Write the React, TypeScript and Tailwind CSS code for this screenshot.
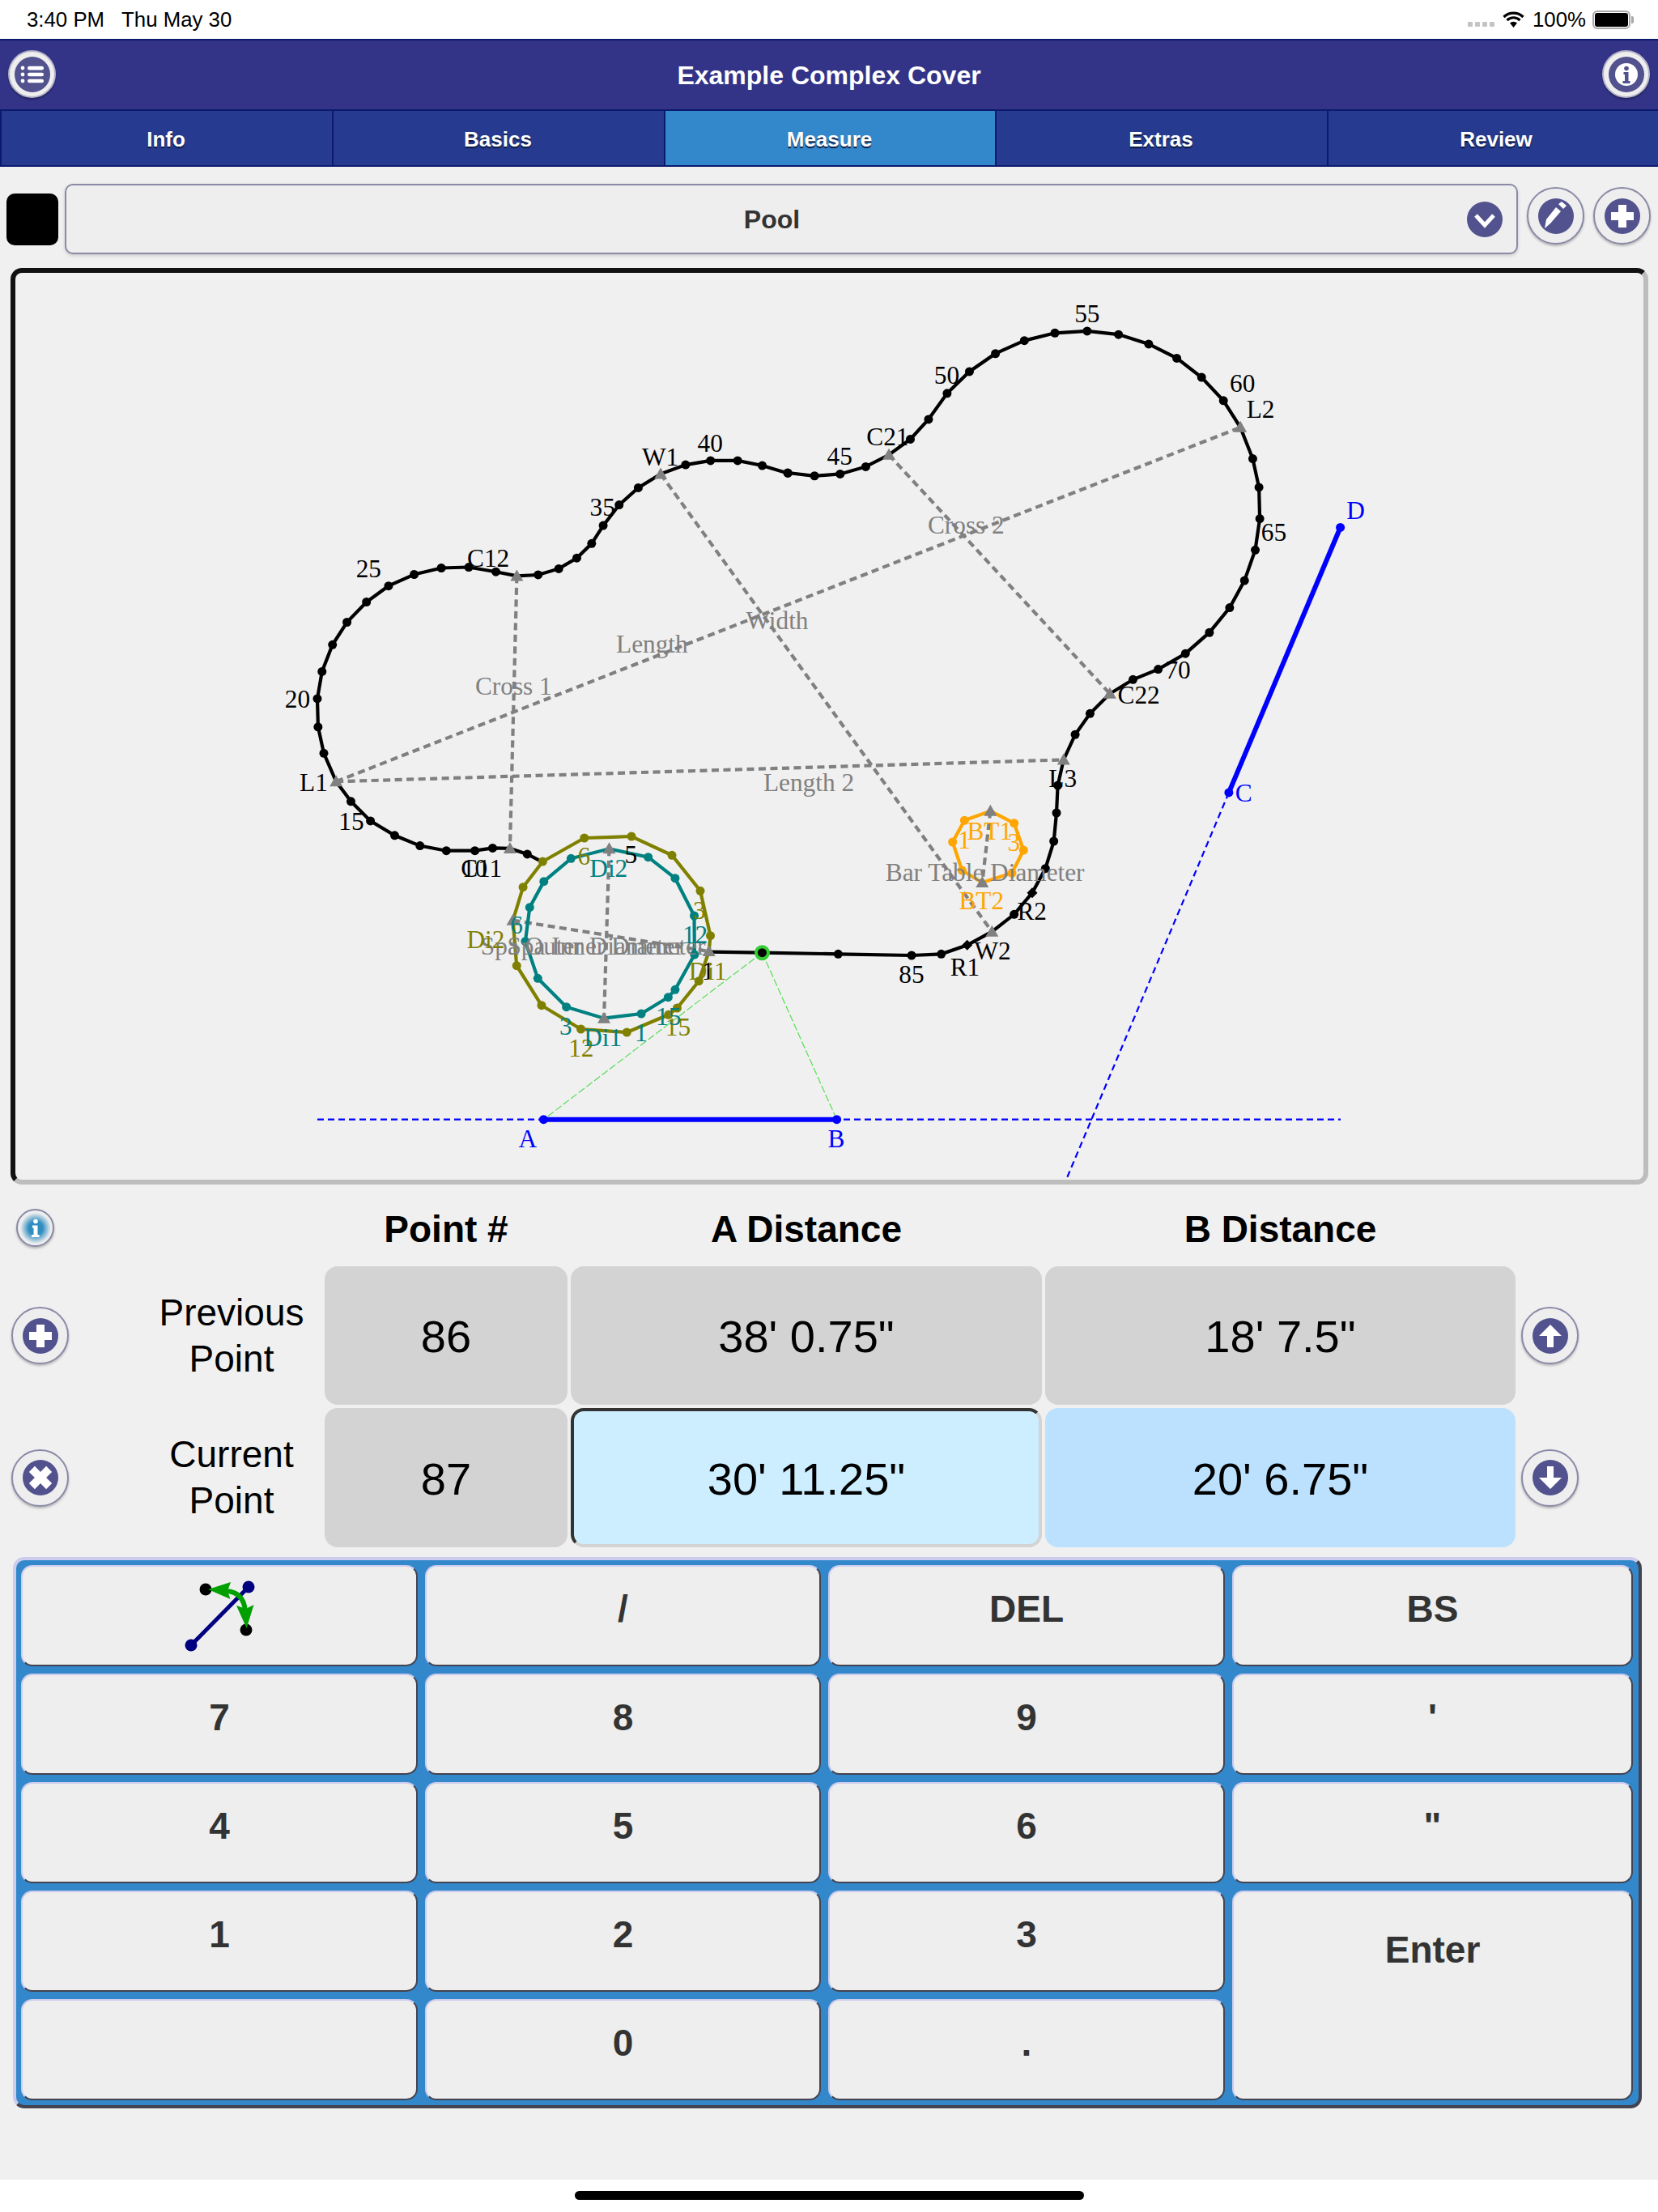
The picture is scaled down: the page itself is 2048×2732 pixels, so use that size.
import React from "react";

type P = [number, number];
const z3 = (x: number, y: number): P => [300 + x / 2.24, 340 + y / 2.119];
const z4 = (x: number, y: number): P => [950 + x / 1.96, 340 + y / 2.119];
const z5 = (x: number, y: number): P => [540 + x / 2.8, 980 + y / 3];
const z6 = (x: number, y: number): P => [1050 + x / 3, 960 + y / 3];
const pts = (a: P[]) => a.map((p) => p[0].toFixed(1) + "," + p[1].toFixed(1)).join(" ");

const upper: P[] = [
  z3(258, 1325), z3(224, 1251), z3(208, 1182), z3(206, 1108), z3(219, 1037), z3(248, 967), z3(288, 908), z3(342, 855),
  z3(403, 813), z3(474, 783), z3(549, 766), z3(625, 764), z3(700, 776), z3(758, 787), z3(817, 784), z3(874, 768),
  z3(924, 740), z3(965, 702), z3(997, 655), z3(1041, 601), z3(1094, 556), z3(1156, 520), z3(1225, 496), z3(1294, 485),
  z3(1369, 485), z3(1437, 498), z3(1508, 518),
  z4(45, 517), z4(110, 525), z4(172, 520), z4(234, 501), z4(290, 470), z4(342, 429), z4(386, 377), z4(431, 309),
  z4(485, 252), z4(548, 205), z4(618, 171), z4(692, 151), z4(770, 146), z4(846, 155), z4(919, 180), z4(987, 217),
  z4(1047, 267), z4(1100, 328), z4(1141, 398), z4(1171, 480), z4(1186, 555), z4(1188, 637), z4(1177, 719), z4(1151, 799),
  z4(1115, 870), z4(1066, 935), z4(1008, 990), z4(942, 1031), z4(881, 1058), z4(825, 1095), z4(777, 1147), z4(741, 1202),
  z4(713, 1268), z4(699, 1335), z6(765, 132), z6(755, 237), z6(724, 338), z6(675, 428), z6(608, 508), z6(526, 572),
  z6(434, 622), z6(338, 655), z6(228, 660), z5(1387, 595), z5(1124, 590), z5(940, 587),
];
const lower: P[] = [
  z3(258, 1325), z3(299, 1377), z3(353, 1428), z3(420, 1466), z3(490, 1493), z3(563, 1506), z3(642, 1506), z3(691, 1499),
  z3(739, 1500), z3(787, 1515), z3(828, 1535),
];
const olive: P[] = [
  z5(509, 165), z5(672, 159), z5(812, 229), z5(910, 361), z5(945, 527), z5(940, 585), z5(905, 695), z5(830, 795),
  z5(800, 820), z5(656, 885), z5(497, 873), z5(361, 785), z5(275, 638), z5(262, 470), z5(297, 347), z5(365, 252),
];
const teal: P[] = [
  z5(595, 205), z5(730, 236), z5(823, 314), z5(889, 453), z5(890, 597), z5(823, 727), z5(799, 755), z5(706, 816),
  z5(577, 833), z5(447, 791), z5(348, 685), z5(305, 548), z5(320, 422), z5(369, 326), z5(463, 241),
];
const orange: P[] = [z6(520, 125), z6(608, 170), z6(643, 270), z6(600, 355), z6(490, 390), z6(415, 345), z6(380, 240), z6(424, 160)];

const triIdx = new Set([0, 13, 21, 31, 45, 56, 59, 66, 72]);
const diamondIdx = new Set([64, 67]);

const dashes: [P, P][] = [
  [z3(258, 1325), z4(713, 1268)],
  [z3(258, 1325), z4(1141, 398)],
  [z3(1156, 520), z6(526, 572)],
  [z3(758, 787), z3(739, 1500)],
  [z4(290, 470), z4(825, 1095)],
  [z5(595, 205), z5(577, 833)],
  [z5(262, 470), z5(940, 585)],
  [z6(520, 125), z6(490, 390)],
];
const triangles: P[] = [
  z3(258, 1325), z3(758, 787), z3(1156, 520), z3(739, 1500), z4(290, 470), z4(1141, 398), z4(825, 1095), z4(713, 1268),
  z6(526, 572), z5(940, 585), z5(595, 205), z5(577, 833), z5(262, 470), z6(520, 125), z6(490, 390),
];

type L = [string, P, string];
const BK = "#000000", GR = "#808080", OL = "#808000", TE = "#008080", OR = "#ffa500", BL = "#0000ff";
const labels: L[] = [
  ["20", z3(151, 1132), BK], ["25", z3(348, 790), BK], ["C12", z3(679, 763), BK], ["W1", z3(1155, 497), BK],
  ["40", z3(1293, 462), BK], ["35", z3(995, 630), BK], ["L1", z3(196, 1350), BK], ["15", z3(300, 1452), BK],
  ["C11", z5(153, 308), BK], ["10", z5(130, 308), BK],
  ["55", z4(770, 122), BK], ["50", z4(430, 285), BK], ["C21", z4(287, 445), BK], ["45", z4(171, 495), BK],
  ["60", z4(1146, 305), BK], ["L2", z4(1190, 374), BK], ["65", z4(1222, 695), BK], ["70", z4(990, 1055), BK],
  ["C22", z4(895, 1120), BK], ["L3", z4(711, 1340), BK],
  ["R2", z6(674, 528), BK], ["W2", z6(528, 675), BK], ["R1", [1192, 1205], BK], ["85", [1126, 1214], BK],
  ["5", z5(670, 258), BK], ["1", z5(937, 690), BK],
  ["Cross 1", z3(749, 1098), GR], ["Length", z3(1132, 987), GR], ["Width", [960, 777], GR], ["Length 2", [999, 977], GR],
  ["Cross 2", z4(477, 677), GR], ["Bar Table Diameter", z6(500, 383), GR],
  ["Spa Outer Diameter", [719, 1179], GR], ["Spa Inner Diameter", [749, 1179], GR],
  ["BT1", z6(517, 230), OR], ["1", z6(423, 263), OR], ["3", z6(607, 272), OR], ["BT2", z6(487, 490), OR],
  ["6", z5(508, 265), OL], ["3", z5(907, 465), OL], ["Di2", z5(168, 572), OL], ["12", z5(498, 975), OL],
  ["15", z5(833, 897), OL], ["Di1", z5(936, 690), OL],
  ["Di2", z5(593, 310), TE], ["12", z5(892, 555), TE], ["6", [638, 1153], TE], ["3", z5(445, 893), TE],
  ["Di1", z5(573, 935), TE], ["1", z5(705, 917), TE], ["15", z5(800, 858), TE],
  ["D", z4(1420, 637), BL], ["C", z4(1149, 1377), BL], ["A", z5(313, 1310), BL], ["B", z5(1380, 1310), BL],
];

const ptA = z5(368, 1208), ptB = z5(1382, 1208), ptC = z4(1113, 1354), ptD = z4(1383, 660), cur = z5(1124, 590);

function Drawing() {
  return (
    <svg viewBox="19 337 2011 1120" className="block w-full h-full font-['Liberation_Serif',serif]">
      <line x1={cur[0]} y1={cur[1]} x2={ptA[0]} y2={ptA[1]} stroke="#55dd55" strokeWidth="1.2" strokeDasharray="9 3" />
      <line x1={cur[0]} y1={cur[1]} x2={ptB[0]} y2={ptB[1]} stroke="#55dd55" strokeWidth="1.2" strokeDasharray="9 3" />
      <line x1="392" y1={ptA[1]} x2="1656" y2={ptA[1]} stroke={BL} strokeWidth="2.2" strokeDasharray="8 5" />
      <line x1={ptC[0]} y1={ptC[1]} x2="1317" y2="1457" stroke={BL} strokeWidth="2.2" strokeDasharray="8 5" />
      <line x1={ptA[0]} y1={ptA[1]} x2={ptB[0]} y2={ptB[1]} stroke={BL} strokeWidth="6" />
      <line x1={ptC[0]} y1={ptC[1]} x2={ptD[0]} y2={ptD[1]} stroke={BL} strokeWidth="6" />
      {[ptA, ptB, ptC, ptD].map((p, i) => (
        <circle key={i} cx={p[0]} cy={p[1]} r="5.5" fill={BL} />
      ))}
      <polyline points={pts(upper)} fill="none" stroke="#000" strokeWidth="4.2" />
      <polyline points={pts(lower)} fill="none" stroke="#000" strokeWidth="4.2" />
      <circle cx={cur[0]} cy={cur[1]} r="9.5" fill="#33cc33" />
      {upper.map((p, i) =>
        triIdx.has(i) ? null : diamondIdx.has(i) ? (
          <polygon key={i} points={`${p[0]},${p[1] - 6.5} ${p[0] + 6.5},${p[1]} ${p[0]},${p[1] + 6.5} ${p[0] - 6.5},${p[1]}`} fill="#000" />
        ) : (
          <circle key={i} cx={p[0]} cy={p[1]} r="5.5" fill="#000" />
        )
      )}
      {lower.slice(1, -1).map((p, i) => (i === 7 ? null : <circle key={i} cx={p[0]} cy={p[1]} r="5.5" fill="#000" />))}
      {dashes.map(([a, b], i) => (
        <line key={i} x1={a[0]} y1={a[1]} x2={b[0]} y2={b[1]} stroke="#808080" strokeWidth="4.2" strokeDasharray="9 5.5" />
      ))}
      <polygon points={pts(olive)} fill="none" stroke={OL} strokeWidth="4.2" />
      {olive.map((p, i) => (i === 5 || i === 13 ? null : <circle key={i} cx={p[0]} cy={p[1]} r="5.5" fill={OL} />))}
      <polygon points={pts(teal)} fill="none" stroke={TE} strokeWidth="4.2" />
      {teal.map((p, i) => (i === 0 || i === 8 ? null : <circle key={i} cx={p[0]} cy={p[1]} r="5.5" fill={TE} />))}
      <polygon points={pts(orange)} fill="none" stroke={OR} strokeWidth="4.2" />
      {orange.map((p, i) => (i === 0 || i === 4 ? null : <circle key={i} cx={p[0]} cy={p[1]} r="5.5" fill={OR} />))}
      {triangles.map((p, i) => (
        <polygon key={i} points={`${p[0]},${p[1] - 8} ${p[0] + 8},${p[1] + 6} ${p[0] - 8},${p[1] + 6}`} fill="#808080" />
      ))}
      {labels.map(([t, p, c], i) => (
        <text key={i} x={p[0]} y={p[1]} fill={c} fontSize="31.3" textAnchor="middle">
          {t}
        </text>
      ))}
    </svg>
  );
}

function Disc({ children, r = 22 }: { children?: React.ReactNode; r?: number }) {
  return (
    <svg viewBox="-24 -24 48 48" width="48" height="48" className="block shrink-0">
      <circle r={r} fill="#52528e" />
      {children}
    </svg>
  );
}

const PlusGlyph = () => <polygon points="-5,-14 5,-14 5,-5 14,-5 14,5 5,5 5,14 -5,14 -5,5 -14,5 -14,-5 -5,-5" fill="#fff" />;
const CrossGlyph = () => (
  <g transform="rotate(45)">
    <polygon points="-5,-15 5,-15 5,-5 15,-5 15,5 5,5 5,15 -5,15 -5,5 -15,5 -15,-5 -5,-5" fill="#fff" />
  </g>
);
const UpGlyph = () => <polygon points="0,-14 14,0 4,0 4,14 -4,14 -4,0 -14,0" fill="#fff" />;
const DownGlyph = () => <polygon points="0,14 14,0 4,0 4,-14 -4,-14 -4,0 -14,0" fill="#fff" />;
const PencilGlyph = () => (
  <g fill="#fff">
    <polygon points="-14,15 -12,4 0,-11 6,-6 -7,9" />
    <polygon points="3,-15 7,-18 13,-13 9,-9" />
  </g>
);

function RoundBtn({ children, className = "" }: { children: React.ReactNode; className?: string }) {
  return (
    <div
      className={
        "w-[71px] h-[71px] rounded-full border-2 border-[#8a8aa8] bg-[#eeeeee] shadow-[0_2px_3px_rgba(0,0,0,0.25)] flex items-center justify-center shrink-0 " +
        className
      }
    >
      {children}
    </div>
  );
}

function HeaderBtn({ children }: { children: React.ReactNode }) {
  return (
    <div className="w-[59px] h-[59px] rounded-full border-2 border-[#b4b4c8] bg-[#eeeeee] shadow-[0_2px_2px_rgba(0,0,0,0.3)] flex items-center justify-center">
      {children}
    </div>
  );
}

const Wifi = () => (
  <svg width="27" height="20" viewBox="0 0 27 20" className="block">
    <g fill="none" stroke="#000" strokeWidth="3.2">
      <path d="M1.5 7 A17 17 0 0 1 25.5 7" />
      <path d="M5.5 11 A11.5 11.5 0 0 1 21.5 11" />
    </g>
    <path d="M9 14.5 A6.5 6.5 0 0 1 18 14.5 L13.5 20 Z" fill="#000" />
  </svg>
);

const tabs = ["Info", "Basics", "Measure", "Extras", "Review"];

const cellBase = "rounded-[16px] flex items-center justify-center pt-[3px] text-[56px] text-black";

function Key({ label, className = "" }: { label?: React.ReactNode; className?: string }) {
  return (
    <div
      className={
        "bg-[#eeeeee] rounded-[14px] border-2 border-t-[#ccccee] border-l-[#ccccee] border-b-[#444450] border-r-[#444450] flex items-center justify-center pb-[16px] text-[46px] font-bold text-[#333333] " +
        className
      }
    >
      {label}
    </div>
  );
}

const MoveIcon = () => (
  <svg viewBox="220 1945 100 100" width="100" height="100" className="block mt-[10px]">
    <line x1="235" y1="2032" x2="306" y2="1960" stroke="#000080" strokeWidth="5" />
    <circle cx="235" cy="2032" r="7.5" fill="#000080" />
    <circle cx="306" cy="1960" r="7.5" fill="#000080" />
    <circle cx="253" cy="1963" r="7.5" fill="#000" />
    <circle cx="303" cy="2013" r="7.5" fill="#000" />
    <path d="M278 1965 Q300 1966 302 1990" fill="none" stroke="#00a000" strokeWidth="6" />
    <polygon points="256,1963 284,1954 280,1965 283.5,1975" fill="#00a000" />
    <polygon points="303.6,2011 291,1983 302.7,1987 312.5,1982" fill="#00a000" />
  </svg>
);

export default function App() {
  return (
    <div className="w-[2048px] h-[2732px] flex flex-col bg-white font-['Liberation_Sans',Arial,sans-serif] overflow-hidden">
      {/* status bar */}
      <div className="h-[48px] shrink-0 flex items-center justify-between pl-[33px] pr-[30px] text-[25.8px] text-black">
        <div className="flex gap-[21px]">
          <span>3:40 PM</span>
          <span>Thu May 30</span>
        </div>
        <div className="flex items-center">
          <div className="flex gap-[3px] mt-[12px] mr-[10px]">
            <i className="block w-[6px] h-[6px] rounded-[1px] bg-[#c4c4c4]" />
            <i className="block w-[6px] h-[6px] rounded-[1px] bg-[#c4c4c4]" />
            <i className="block w-[6px] h-[6px] rounded-[1px] bg-[#c4c4c4]" />
            <i className="block w-[6px] h-[6px] rounded-[1px] bg-[#c4c4c4]" />
          </div>
          <Wifi />
          <span className="ml-[10px] mr-[8px]">100%</span>
          <div className="w-[47px] h-[23px] rounded-[6px] border-2 border-[#a8a8a8] p-[1px]">
            <div className="w-full h-full bg-black rounded-[3px]" />
          </div>
          <div className="w-[3px] h-[9px] bg-[#a8a8a8] rounded-r-[2px] ml-[1px]" />
        </div>
      </div>

      {/* header */}
      <div className="h-[87px] shrink-0 border-t-2 border-[#0c1a6e] bg-[#333388] flex items-center justify-between px-[10px] pb-[2px]">
        <HeaderBtn>
          <Disc>
            <g fill="#fff">
              <circle cx="-12" cy="-8" r="2.4" />
              <circle cx="-12" cy="0" r="2.4" />
              <circle cx="-12" cy="8" r="2.4" />
              <rect x="-6" y="-10.2" width="20" height="4.6" rx="2.2" />
              <rect x="-6" y="-2.3" width="20" height="4.6" rx="2.2" />
              <rect x="-6" y="5.7" width="20" height="4.6" rx="2.2" />
            </g>
          </Disc>
        </HeaderBtn>
        <div className="text-[32px] font-bold text-white mt-[3px]">Example Complex Cover</div>
        <HeaderBtn>
          <Disc>
            <circle r="14" fill="#fff" />
            <circle cy="-7.5" r="2.8" fill="#52528e" />
            <polygon points="-3.5,-3 2.5,-3 2.5,8 4.5,8 4.5,11 -4.5,11 -4.5,8 -2,8 -2,0 -3.5,0" fill="#52528e" />
          </Disc>
        </HeaderBtn>
      </div>

      {/* tabs */}
      <div className="h-[71px] shrink-0 grid grid-cols-[410px_410px_409px_410px_409px] bg-[#263a8f] border-y-2 border-[#0c1a6e]">
        {tabs.map((t) => (
          <div
            key={t}
            className={
              "flex items-center justify-center border-l-2 border-[#0c1a6e] pt-[3px] text-[26px] font-bold text-white [text-shadow:0_2px_1px_#0c1a40] " +
              (t === "Measure" ? "bg-[#3388cc] " : "") +
              (t === "Review" ? "pl-[7px]" : "pr-[2px]")
            }
          >
            {t}
          </div>
        ))}
      </div>

      {/* content */}
      <div className="h-[2486px] shrink-0 bg-[#f0f0f0] flex flex-col">
        <div className="flex items-center pl-[8px] pt-[21px] mb-[17px]">
          <div className="w-[64px] h-[64px] rounded-[10px] bg-black mr-[8px]" />
          <div className="w-[1795px] h-[87px] rounded-[10px] border-2 border-[#8a8aa8] bg-[#eeeeee] shadow-[0_2px_4px_rgba(0,0,0,0.15)] flex items-center mr-[11px]">
            <div className="flex-1 pl-[15px] text-center text-[32px] font-bold text-[#333333]">Pool</div>
            <div className="mr-[15px]">
              <Disc>
                <polyline points="-11,-5 0,7 11,-5" fill="none" stroke="#fff" strokeWidth="5" />
              </Disc>
            </div>
          </div>
          <RoundBtn className="mr-[11px] mb-[8px]">
            <Disc>
              <PencilGlyph />
            </Disc>
          </RoundBtn>
          <RoundBtn className="mb-[8px]">
            <Disc>
              <PlusGlyph />
            </Disc>
          </RoundBtn>
        </div>

        <div className="ml-[13px] w-[2023px] h-[1132px] shrink-0 rounded-[14px] border-[6px] border-t-[#111111] border-l-[#111111] border-b-[#bdbdbd] border-r-[#bdbdbd] overflow-hidden mb-[30px]">
          <Drawing />
        </div>

        <div className="ml-[14px] grid grid-cols-[383px_300px_582px_581px_auto] grid-rows-[67px_171px_172px] gap-x-[4px] gap-y-[4px] text-black">
          <div className="pl-[6px]">
            <div className="w-[47px] h-[47px] rounded-full border-2 border-[#8a8aa8] bg-[#eeeeee] shadow-[0_2px_3px_rgba(0,0,0,0.25)] flex items-center justify-center">
              <svg viewBox="-20 -20 40 40" width="40" height="40" className="block">
                <defs>
                  <radialGradient id="infoGrad" r="0.5">
                    <stop offset="0.45" stopColor="#2f8dc0" />
                    <stop offset="1" stopColor="#2f8dc0" stopOpacity="0" />
                  </radialGradient>
                </defs>
                <circle r="19" fill="url(#infoGrad)" />
                <circle cy="-8.5" r="2.8" fill="#fff" />
                <polygon points="-4,-3.5 2.5,-3.5 2.5,8 4.5,8 4.5,11 -5,11 -5,8 -2.5,8 -2.5,-0.5 -4,-0.5" fill="#fff" />
              </svg>
            </div>
          </div>
          <div className="text-center text-[46px] font-bold h-[47px] leading-[50px]">Point #</div>
          <div className="text-center text-[46px] font-bold h-[47px] leading-[50px]">A Distance</div>
          <div className="text-center text-[46px] font-bold h-[47px] leading-[50px]">B Distance</div>
          <div />

          <div className="flex items-center">
            <RoundBtn>
              <Disc>
                <PlusGlyph />
              </Disc>
            </RoundBtn>
            <div className="ml-[101px] w-[200px] text-center text-[46px] leading-[57px]">
              Previous
              <br />
              Point
            </div>
          </div>
          <div className={cellBase + " bg-[#d3d3d3]"}>86</div>
          <div className={cellBase + " bg-[#d3d3d3]"}>38' 0.75"</div>
          <div className={cellBase + " bg-[#d3d3d3]"}>18' 7.5"</div>
          <div className="flex items-center pl-[3px]">
            <RoundBtn>
              <Disc>
                <UpGlyph />
              </Disc>
            </RoundBtn>
          </div>

          <div className="flex items-center">
            <RoundBtn>
              <Disc>
                <CrossGlyph />
              </Disc>
            </RoundBtn>
            <div className="ml-[101px] w-[200px] text-center text-[46px] leading-[57px]">
              Current
              <br />
              Point
            </div>
          </div>
          <div className={cellBase + " bg-[#d3d3d3]"}>87</div>
          <div className={cellBase + " bg-[#cceeff] border-4 border-t-[#333333] border-l-[#333333] border-b-[#d3d3d3] border-r-[#d3d3d3]"}>
            30' 11.25"
          </div>
          <div className={cellBase + " bg-[#bbe1ff]"}>20' 6.75"</div>
          <div className="flex items-center pl-[3px]">
            <RoundBtn>
              <Disc>
                <DownGlyph />
              </Disc>
            </RoundBtn>
          </div>
        </div>

        <div className="ml-[16px] mt-[12px] w-[2012px] h-[681px] shrink-0 rounded-[14px] border-4 border-t-[#ccccee] border-l-[#ccccee] border-b-[#444450] border-r-[#444450] bg-[#3388cc] pl-[6px] pt-[6px] grid grid-cols-[490px_489px_490px_495px] grid-rows-[repeat(5,124.6px)] gap-x-[9px] gap-y-[9.4px]">
          <Key className="items-start! pb-0!" label={<MoveIcon />} />
          <Key label="/" />
          <Key label="DEL" />
          <Key label="BS" />
          <Key label="7" />
          <Key label="8" />
          <Key label="9" />
          <Key label="'" />
          <Key label="4" />
          <Key label="5" />
          <Key label="6" />
          <Key label={'"'} />
          <Key label="1" />
          <Key label="2" />
          <Key label="3" />
          <Key label="Enter" className="row-span-2 items-start! pb-0! pt-[37px]" />
          <Key />
          <Key label="0" />
          <Key label="." />
        </div>
      </div>

      {/* home bar */}
      <div className="flex-1 flex justify-center pt-[14px]">
        <div className="w-[629px] h-[11px] rounded-full bg-black" />
      </div>
    </div>
  );
}
